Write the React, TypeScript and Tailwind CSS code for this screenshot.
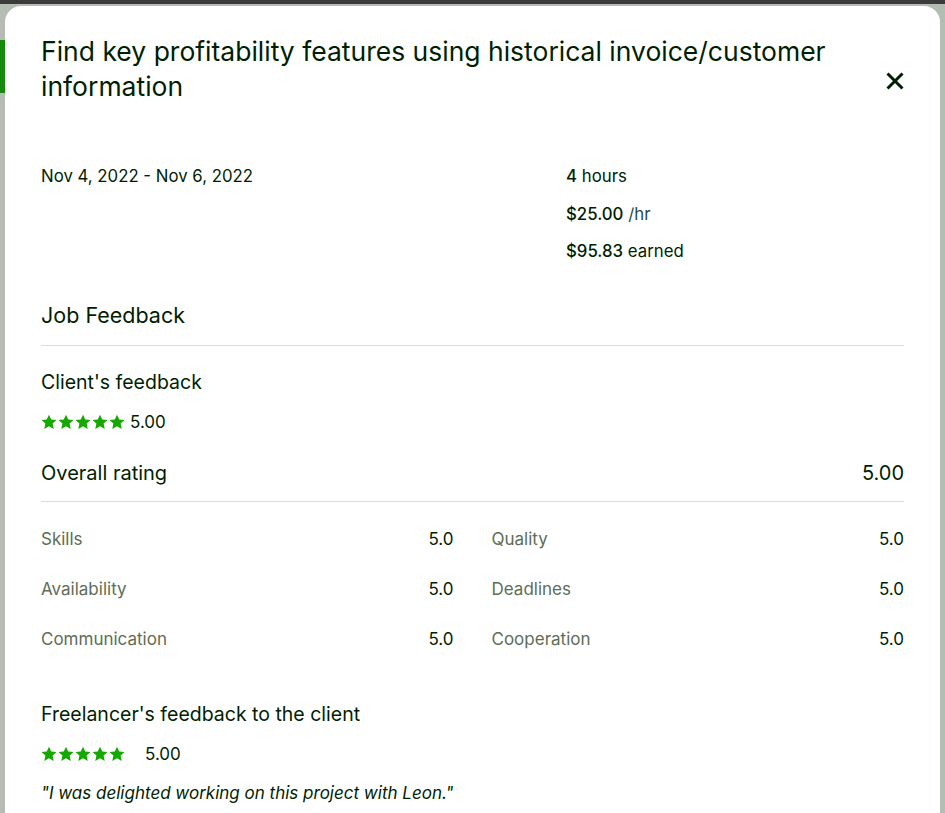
import { Fragment } from 'react';

const Star = () => (
  <svg viewBox="0 0 20 20" className="w-[16px] h-[16px] fill-[#14a800]">
    <polygon points="10,0.8 12.8,6.8 19.4,7.5 14.5,12 15.9,18.6 10,15.2 4.1,18.6 5.5,12 0.6,7.5 7.2,6.8" />
  </svg>
);

const Stars = () => (
  <div className="flex gap-[1px]">
    {[0, 1, 2, 3, 4].map((i) => (
      <Star key={i} />
    ))}
  </div>
);

const ratings: [string, string][] = [
  ['Skills', '5.0'],
  ['Quality', '5.0'],
  ['Availability', '5.0'],
  ['Deadlines', '5.0'],
  ['Communication', '5.0'],
  ['Cooperation', '5.0'],
];

export default function App() {
  return (
    <div
      className="relative h-[813px] overflow-hidden bg-[#b5bcb3] text-[#001e00]"
      style={{ fontFamily: 'Inter, "Liberation Sans", sans-serif' }}
    >
      {/* page behind the overlay */}
      <div className="h-[4px] bg-[#3b3b3b]" />
      <div className="absolute left-0 top-[40px] w-[5px] h-[53px] bg-[#168a0c]" />

      <div className="flex px-[5px] pt-[2px]">
        <div className="relative flex-1 bg-white rounded-t-[16px] pl-9 pr-[36px] pt-[28px] h-[820px]">
          {/* Header */}
          <div className="flex justify-between items-start">
            <h2 className="w-[805px] text-[26.5px] leading-[35px] font-normal">
              Find key profitability features using historical invoice/customer information
            </h2>
            <button className="mt-[38px] w-[18px] h-[18px]">
              <svg viewBox="0 0 18 18" className="w-[18px] h-[18px]">
                <path d="M1.5 1.5 L16.5 16.5 M16.5 1.5 L1.5 16.5" stroke="#001e00" strokeWidth="3" fill="none" />
              </svg>
            </button>
          </div>

          {/* Summary */}
          <div className="flex mt-[60px] text-[16.8px] leading-[24px]">
            <div className="w-[525px]">Nov 4, 2022 - Nov 6, 2022</div>
            <div className="flex flex-col gap-[13.5px]">
              <div>
                <span className="font-medium">4</span> hours
              </div>
              <div>
                <span className="font-medium">$25.00</span> <span className="text-[#1f4a4f]">/hr</span>
              </div>
              <div>
                <span className="font-medium">$95.83</span> earned
              </div>
            </div>
          </div>

          {/* Job feedback */}
          <h3 className="mt-[38px] text-[21.5px] leading-[28px] font-normal">Job Feedback</h3>
          <div className="mt-[16px] border-t border-[#d5e0d5]" />

          <h4 className="mt-[22px] text-[19.5px] leading-[28px] font-normal">Client's feedback</h4>
          <div className="mt-[14px] flex items-center gap-[5px]">
            <Stars />
            <span className="text-[17px] leading-[24px]">5.00</span>
          </div>

          <div className="mt-[25px] flex justify-between items-center text-[20px] leading-[28px]">
            <span>Overall rating</span>
            <span>5.00</span>
          </div>
          <div className="mt-[14px] border-t border-[#d5e0d5]" />

          <div className="mt-[25px] grid grid-cols-2 gap-x-[38px] gap-y-[26px] text-[17px] leading-[24px]">
            {ratings.map(([label, value]) => (
              <Fragment key={label}>
                <div className="flex justify-between">
                  <span className="text-[#5e6d55]">{label}</span>
                  <span>{value}</span>
                </div>
              </Fragment>
            ))}
          </div>

          <h4 className="mt-[49px] text-[19.5px] leading-[28px] font-normal">Freelancer's feedback to the client</h4>
          <div className="mt-[14px] flex items-center gap-[20px]">
            <Stars />
            <span className="text-[17px] leading-[24px]">5.00</span>
          </div>
          <p className="mt-[15px] italic text-[17px] leading-[24px]">
            "I was delighted working on this project with Leon."
          </p>
        </div>
      </div>
    </div>
  );
}
